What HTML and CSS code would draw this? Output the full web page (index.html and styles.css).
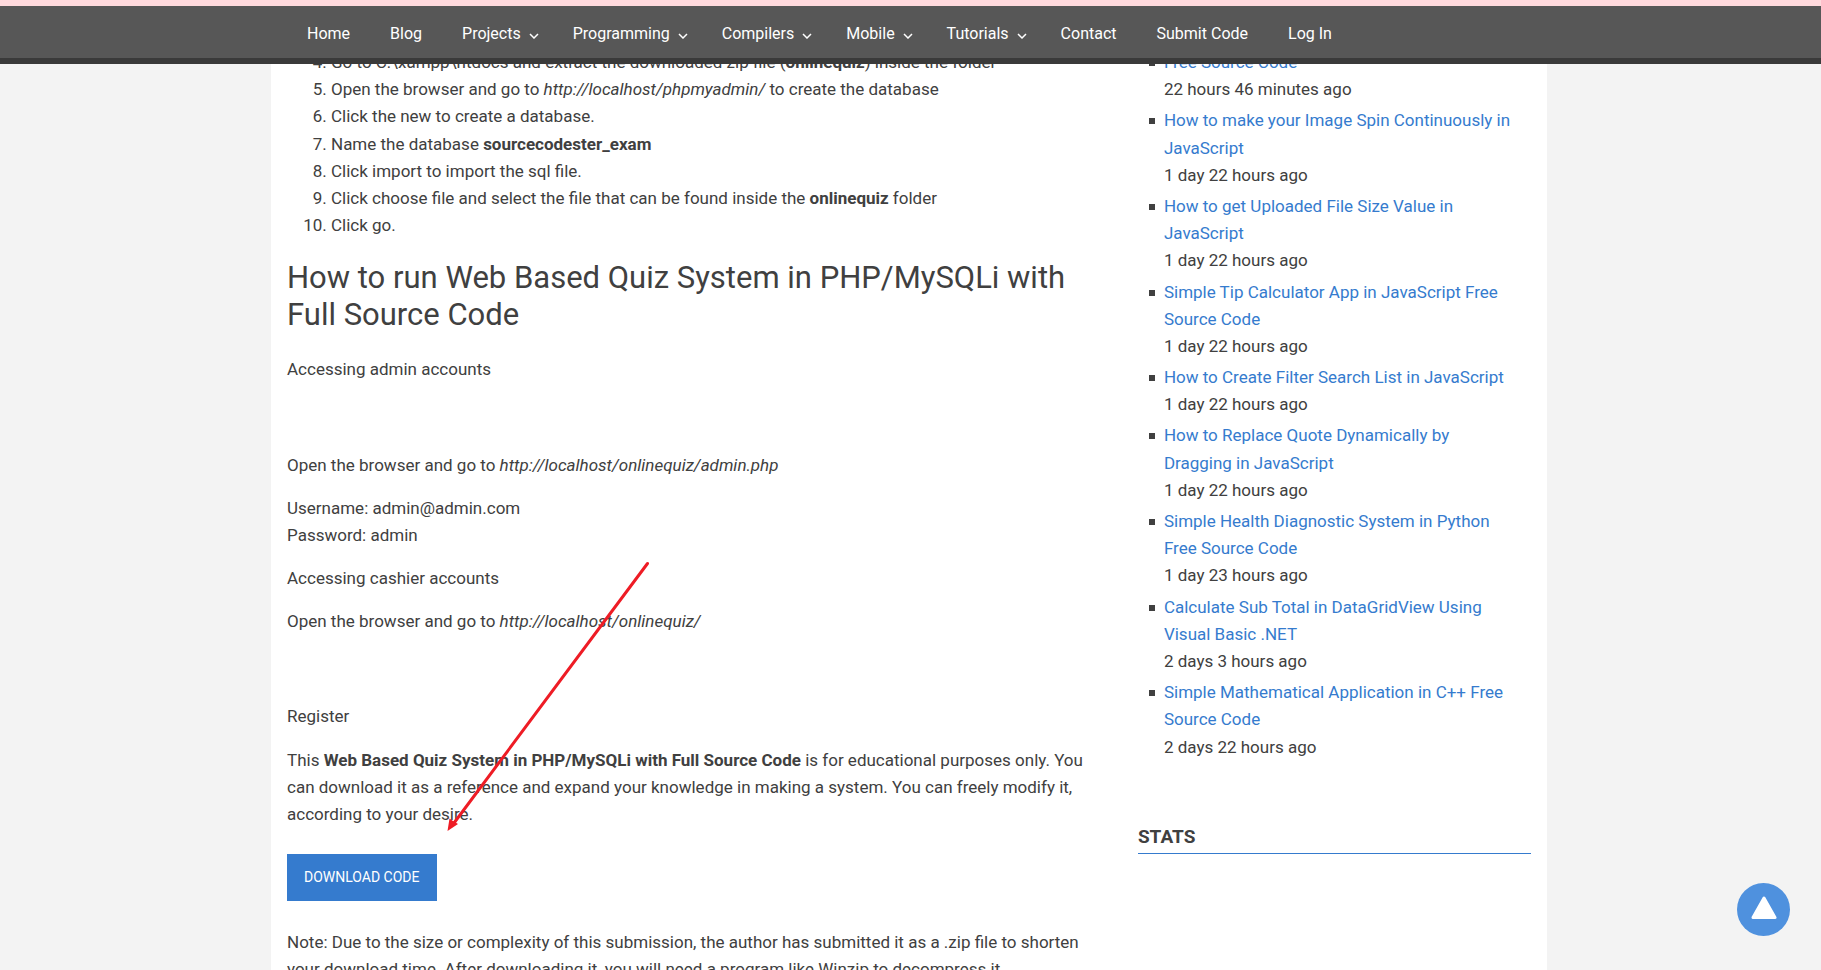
FILE: index.html
```html
<!DOCTYPE html>
<html lang="en">
<head>
<meta charset="utf-8">
<title>Web Based Quiz System in PHP/MySQLi with Full Source Code</title>
<link rel="stylesheet" href="styles.css">
</head>
<body>
<header class="site-header">
  <nav class="menu" aria-label="Main">
    <a href="#">Home</a>
    <a href="#">Blog</a>
    <a href="#">Projects<svg class="caret" viewBox="0 0 10 6"><path d="M1 1l4 4 4-4"/></svg></a>
    <a href="#">Programming<svg class="caret" viewBox="0 0 10 6"><path d="M1 1l4 4 4-4"/></svg></a>
    <a href="#">Compilers<svg class="caret" viewBox="0 0 10 6"><path d="M1 1l4 4 4-4"/></svg></a>
    <a href="#">Mobile<svg class="caret" viewBox="0 0 10 6"><path d="M1 1l4 4 4-4"/></svg></a>
    <a href="#">Tutorials<svg class="caret" viewBox="0 0 10 6"><path d="M1 1l4 4 4-4"/></svg></a>
    <a href="#">Contact</a>
    <a href="#">Submit Code</a>
    <a href="#">Log In</a>
  </nav>
</header>
<div class="page">
  <main class="article">
    <ol class="steps" start="4">
      <li>Go to C:\xampp\htdocs and extract the downloaded zip file (<strong>onlinequiz</strong>) inside the folder</li>
      <li>Open the browser and go to <em>http://localhost/phpmyadmin/</em> to create the database</li>
      <li>Click the new to create a database.</li>
      <li>Name the database <strong>sourcecodester_exam</strong></li>
      <li>Click import to import the sql file.</li>
      <li>Click choose file and select the file that can be found inside the <strong>onlinequiz</strong> folder</li>
      <li>Click go.</li>
    </ol>
    <h2>How to run Web Based Quiz System in PHP/MySQLi with Full Source Code</h2>
    <p>Accessing admin accounts</p>
    <p class="spaced">Open the browser and go to <em>http://localhost/onlinequiz/admin.php</em></p>
    <p>Username: admin@admin.com<br>Password: admin</p>
    <p>Accessing cashier accounts</p>
    <p>Open the browser and go to <em>http://localhost/onlinequiz/</em></p>
    <p class="spaced">Register</p>
    <p>This <strong>Web Based Quiz System in PHP/MySQLi with Full Source Code</strong> is for educational purposes only. You can download it as a reference and expand your knowledge in making a system. You can freely modify it, according to your desire.</p>
    <button class="download" type="button">DOWNLOAD CODE</button>
    <p>Note: Due to the size or complexity of this submission, the author has submitted it as a .zip file to shorten your download time. After downloading it, you will need a program like Winzip to decompress it.</p>
  </main>
  <aside class="sidebar">
    <ul class="recent">
      <li><a href="#">Free Source Code</a><span>22 hours 46 minutes ago</span></li>
      <li><a href="#">How to make your Image Spin Continuously in JavaScript</a><span>1 day 22 hours ago</span></li>
      <li><a href="#">How to get Uploaded File Size Value in JavaScript</a><span>1 day 22 hours ago</span></li>
      <li><a href="#">Simple Tip Calculator App in JavaScript Free Source Code</a><span>1 day 22 hours ago</span></li>
      <li><a href="#">How to Create Filter Search List in JavaScript</a><span>1 day 22 hours ago</span></li>
      <li><a href="#">How to Replace Quote Dynamically by Dragging in JavaScript</a><span>1 day 22 hours ago</span></li>
      <li><a href="#">Simple Health Diagnostic System in Python Free Source Code</a><span>1 day 23 hours ago</span></li>
      <li><a href="#">Calculate Sub Total in DataGridView Using Visual Basic .NET</a><span>2 days 3 hours ago</span></li>
      <li><a href="#">Simple Mathematical Application in C++ Free Source Code</a><span>2 days 22 hours ago</span></li>
    </ul>
    <h3>STATS</h3>
  </aside>
  <svg class="arrow" viewBox="0 0 202 272" aria-hidden="true"><path class="shaft" d="M200.500 2.500L7 262"/><path class="head" d="M.5 270L2.500 257.500 6 260 11 263z"/></svg>
</div>
<button class="to-top" type="button" aria-label="Back to top"><svg viewBox="0 0 26 24"><path d="M13 2L24 21.500H2z"/></svg></button>
</body>
</html>
```
FILE: styles.css
```css
* { box-sizing: border-box; }
body {
  margin: 0;
  padding-right: 3px;
  height: 100vh;
  overflow: hidden;
  background: #f3f3f3;
  color: #404040;
  font: 17px/1.6 Roboto, "Liberation Sans", sans-serif;
}
a { color: #357bce; text-decoration: none; }
.site-header {
  position: fixed;
  inset: 0 0 auto;
  z-index: 2;
  height: 64px;
  padding-right: 3px;
  background: #575757;
  border-top: 6px solid #ffdadd;
  border-bottom: 6px solid #3a3a3a;
}
.menu {
  display: flex;
  max-width: 1276px;
  margin: 0 auto;
  padding: 2px 16px 0;
}
.menu a {
  display: flex;
  align-items: center;
  padding: 0 20px;
  color: #fff;
  font-size: 16px;
  line-height: 52px;
}
.menu a:has(.caret) { padding-right: 14px; }
.caret {
  width: 10px;
  height: 6px;
  margin: 3px 0 0 8px;
  fill: none;
  stroke: #fff;
  stroke-width: 1.5;
}
.page {
  position: relative;
  display: grid;
  grid-template-columns: 25fr 12fr;
  gap: 32px;
  max-width: 1276px;
  min-height: 100vh;
  margin: 0 auto;
  padding: 49px 16px 0;
  background: #fff;
}
.steps { margin: 0; padding-left: 44px; }
h2 {
  margin: 20px 0 23px;
  font-size: 31px;
  font-weight: 400;
  line-height: 37px;
}
p { margin: 0 0 16px; }
.spaced { margin-top: 68px; }
.download {
  display: block;
  margin: 26px 0 28px;
  padding: 0 17px;
  border: 0;
  background: #357bce;
  color: #fff;
  font: 14px/47px Roboto, "Liberation Sans", sans-serif;
}
.recent {
  margin: 0;
  padding: 0 16px 0 11px;
  list-style: none;
}
.recent li {
  display: grid;
  grid-template-columns: 6px 1fr;
  column-gap: 9px;
  margin-bottom: 4px;
}
.recent li::before {
  content: "";
  width: 6px;
  height: 6px;
  margin-top: 11px;
  background: #404040;
}
.recent span { grid-column: 2; }
h3 {
  margin: 60px 0 0;
  border-bottom: 1px solid #357bce;
  font-size: 19px;
  line-height: 32px;
}
.arrow {
  position: absolute;
  left: 176px;
  top: 561px;
  width: 202px;
  height: 272px;
  pointer-events: none;
}
.shaft { fill: none; stroke: #ee1c25; stroke-width: 3; stroke-linecap: round; }
.head { fill: #ee1c25; }
.to-top {
  position: fixed;
  right: 31px;
  bottom: 34px;
  display: grid;
  place-items: center;
  width: 53px;
  height: 53px;
  padding: 0 0 4px;
  border: 0;
  border-radius: 50%;
  background: #4f91de;
}
.to-top svg {
  width: 26px;
  height: 24px;
  fill: #fff;
  stroke: #fff;
  stroke-width: 3;
  stroke-linejoin: round;
}
```
